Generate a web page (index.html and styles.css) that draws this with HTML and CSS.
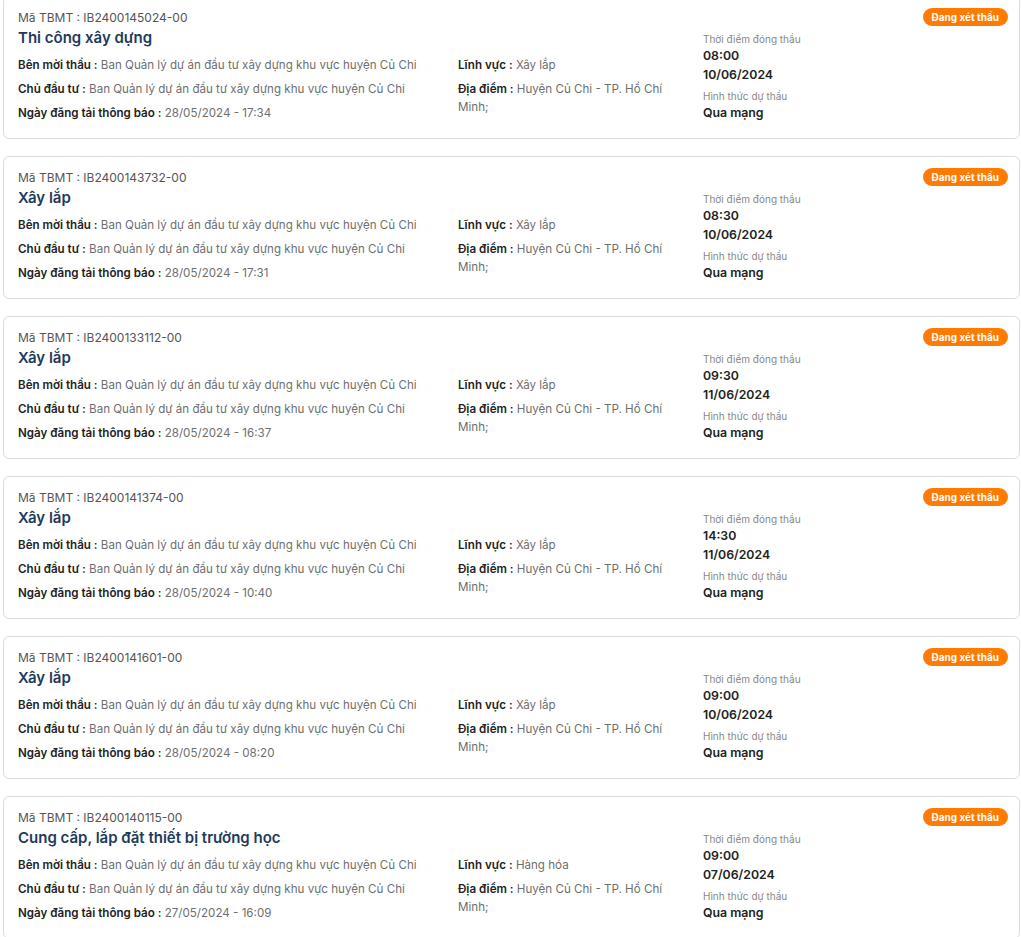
FILE: index.html
```html
<!DOCTYPE html>
<html lang="vi">
<head>
<meta charset="utf-8">
<title>Danh sách TBMT</title>
<link rel="stylesheet" href="styles.css">
</head>
<body>
<div class="list">

  <div class="card">
    <div class="head">
      <div class="code">Mã TBMT : IB2400145024-00</div>
      <span class="badge">Đang xét thầu</span>
    </div>
    <div class="body">
      <div class="col-left">
        <div class="title">Thi công xây dựng</div>
        <div class="row"><b>Bên mời thầu :</b> Ban Quản lý dự án đầu tư xây dựng khu vực huyện Củ Chi</div>
        <div class="row"><b>Chủ đầu tư :</b> Ban Quản lý dự án đầu tư xây dựng khu vực huyện Củ Chi</div>
        <div class="row"><b>Ngày đăng tải thông báo :</b> 28/05/2024 - 17:34</div>
      </div>
      <div class="col-mid">
        <div class="row"><b>Lĩnh vực :</b> Xây lắp</div>
        <div class="row"><b>Địa điểm :</b> Huyện Củ Chi - TP. Hồ Chí Minh;</div>
      </div>
      <div class="col-right">
        <div class="lbl">Thời điểm đóng thầu</div>
        <div class="val">08:00</div>
        <div class="val">10/06/2024</div>
        <div class="lbl lbl2">Hình thức dự thầu</div>
        <div class="val">Qua mạng</div>
      </div>
    </div>
  </div>

  <div class="card">
    <div class="head">
      <div class="code">Mã TBMT : IB2400143732-00</div>
      <span class="badge">Đang xét thầu</span>
    </div>
    <div class="body">
      <div class="col-left">
        <div class="title">Xây lắp</div>
        <div class="row"><b>Bên mời thầu :</b> Ban Quản lý dự án đầu tư xây dựng khu vực huyện Củ Chi</div>
        <div class="row"><b>Chủ đầu tư :</b> Ban Quản lý dự án đầu tư xây dựng khu vực huyện Củ Chi</div>
        <div class="row"><b>Ngày đăng tải thông báo :</b> 28/05/2024 - 17:31</div>
      </div>
      <div class="col-mid">
        <div class="row"><b>Lĩnh vực :</b> Xây lắp</div>
        <div class="row"><b>Địa điểm :</b> Huyện Củ Chi - TP. Hồ Chí Minh;</div>
      </div>
      <div class="col-right">
        <div class="lbl">Thời điểm đóng thầu</div>
        <div class="val">08:30</div>
        <div class="val">10/06/2024</div>
        <div class="lbl lbl2">Hình thức dự thầu</div>
        <div class="val">Qua mạng</div>
      </div>
    </div>
  </div>

  <div class="card">
    <div class="head">
      <div class="code">Mã TBMT : IB2400133112-00</div>
      <span class="badge">Đang xét thầu</span>
    </div>
    <div class="body">
      <div class="col-left">
        <div class="title">Xây lắp</div>
        <div class="row"><b>Bên mời thầu :</b> Ban Quản lý dự án đầu tư xây dựng khu vực huyện Củ Chi</div>
        <div class="row"><b>Chủ đầu tư :</b> Ban Quản lý dự án đầu tư xây dựng khu vực huyện Củ Chi</div>
        <div class="row"><b>Ngày đăng tải thông báo :</b> 28/05/2024 - 16:37</div>
      </div>
      <div class="col-mid">
        <div class="row"><b>Lĩnh vực :</b> Xây lắp</div>
        <div class="row"><b>Địa điểm :</b> Huyện Củ Chi - TP. Hồ Chí Minh;</div>
      </div>
      <div class="col-right">
        <div class="lbl">Thời điểm đóng thầu</div>
        <div class="val">09:30</div>
        <div class="val">11/06/2024</div>
        <div class="lbl lbl2">Hình thức dự thầu</div>
        <div class="val">Qua mạng</div>
      </div>
    </div>
  </div>

  <div class="card">
    <div class="head">
      <div class="code">Mã TBMT : IB2400141374-00</div>
      <span class="badge">Đang xét thầu</span>
    </div>
    <div class="body">
      <div class="col-left">
        <div class="title">Xây lắp</div>
        <div class="row"><b>Bên mời thầu :</b> Ban Quản lý dự án đầu tư xây dựng khu vực huyện Củ Chi</div>
        <div class="row"><b>Chủ đầu tư :</b> Ban Quản lý dự án đầu tư xây dựng khu vực huyện Củ Chi</div>
        <div class="row"><b>Ngày đăng tải thông báo :</b> 28/05/2024 - 10:40</div>
      </div>
      <div class="col-mid">
        <div class="row"><b>Lĩnh vực :</b> Xây lắp</div>
        <div class="row"><b>Địa điểm :</b> Huyện Củ Chi - TP. Hồ Chí Minh;</div>
      </div>
      <div class="col-right">
        <div class="lbl">Thời điểm đóng thầu</div>
        <div class="val">14:30</div>
        <div class="val">11/06/2024</div>
        <div class="lbl lbl2">Hình thức dự thầu</div>
        <div class="val">Qua mạng</div>
      </div>
    </div>
  </div>

  <div class="card">
    <div class="head">
      <div class="code">Mã TBMT : IB2400141601-00</div>
      <span class="badge">Đang xét thầu</span>
    </div>
    <div class="body">
      <div class="col-left">
        <div class="title">Xây lắp</div>
        <div class="row"><b>Bên mời thầu :</b> Ban Quản lý dự án đầu tư xây dựng khu vực huyện Củ Chi</div>
        <div class="row"><b>Chủ đầu tư :</b> Ban Quản lý dự án đầu tư xây dựng khu vực huyện Củ Chi</div>
        <div class="row"><b>Ngày đăng tải thông báo :</b> 28/05/2024 - 08:20</div>
      </div>
      <div class="col-mid">
        <div class="row"><b>Lĩnh vực :</b> Xây lắp</div>
        <div class="row"><b>Địa điểm :</b> Huyện Củ Chi - TP. Hồ Chí Minh;</div>
      </div>
      <div class="col-right">
        <div class="lbl">Thời điểm đóng thầu</div>
        <div class="val">09:00</div>
        <div class="val">10/06/2024</div>
        <div class="lbl lbl2">Hình thức dự thầu</div>
        <div class="val">Qua mạng</div>
      </div>
    </div>
  </div>

  <div class="card">
    <div class="head">
      <div class="code">Mã TBMT : IB2400140115-00</div>
      <span class="badge">Đang xét thầu</span>
    </div>
    <div class="body">
      <div class="col-left">
        <div class="title">Cung cấp, lắp đặt thiết bị trường học</div>
        <div class="row"><b>Bên mời thầu :</b> Ban Quản lý dự án đầu tư xây dựng khu vực huyện Củ Chi</div>
        <div class="row"><b>Chủ đầu tư :</b> Ban Quản lý dự án đầu tư xây dựng khu vực huyện Củ Chi</div>
        <div class="row"><b>Ngày đăng tải thông báo :</b> 27/05/2024 - 16:09</div>
      </div>
      <div class="col-mid">
        <div class="row"><b>Lĩnh vực :</b> Hàng hóa</div>
        <div class="row"><b>Địa điểm :</b> Huyện Củ Chi - TP. Hồ Chí Minh;</div>
      </div>
      <div class="col-right">
        <div class="lbl">Thời điểm đóng thầu</div>
        <div class="val">09:00</div>
        <div class="val">07/06/2024</div>
        <div class="lbl lbl2">Hình thức dự thầu</div>
        <div class="val">Qua mạng</div>
      </div>
    </div>
  </div>

</div>
</body>
</html>
```

FILE: styles.css
```css
html, body {
  margin: 0;
  padding: 0;
  background: #fff;
}
body {
  font-family: Inter, "Noto Sans", Roboto, sans-serif;
  color: #222;
  overflow: hidden;
}
.list {
  margin-top: -4px;
  padding: 0 1px 0 3px;
}
.card {
  border: 1px solid #dcdcdc;
  border-radius: 6px;
  padding: 12px 11px 16px 14px;
  margin-bottom: 17px;
  background: #fff;
}
.head {
  display: flex;
  justify-content: space-between;
  align-items: center;
  height: 18px;
}
.code {
  font-size: 12px;
  line-height: 18px;
  color: #555;
}
.badge {
  display: inline-block;
  background: #ff7a00;
  color: #fff;
  font-size: 10px;
  font-weight: 700;
  line-height: 18px;
  height: 18px;
  padding: 0 9px;
  border-radius: 9px;
  margin-top: -2px;
}
.body {
  display: grid;
  grid-template-columns: 440px 245px 1fr;
  margin-top: 1px;
}
.title {
  font-size: 15px;
  font-weight: 600;
  line-height: 20px;
  color: #1e3a5c;
  margin-bottom: 8px;
}
.row {
  font-size: 11.6px;
  line-height: 18px;
  color: #6e6e6e;
  margin-bottom: 6px;
}
.row:last-child {
  margin-bottom: 0;
}
.row b {
  font-weight: 600;
  color: #222;
}
.col-mid {
  padding-top: 28px;
  padding-right: 35px;
}
.col-right {
  padding-top: 4px;
}
.lbl {
  font-size: 10px;
  line-height: 14px;
  color: #888;
}
.lbl2 {
  margin-top: 5px;
}
.val {
  font-size: 12.3px;
  line-height: 19px;
  font-weight: 600;
  color: #222;
}
```
